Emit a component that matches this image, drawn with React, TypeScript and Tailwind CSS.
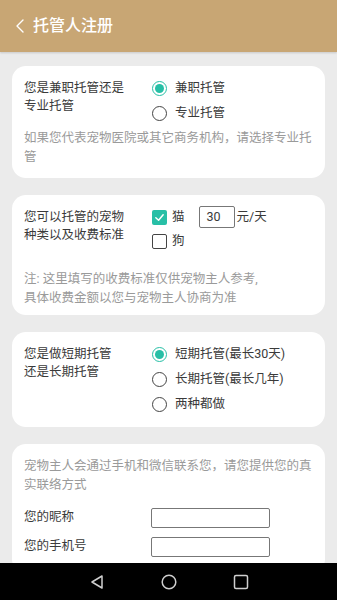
import { ReactNode } from 'react';

const FONT = "font-['Roboto','Noto_Sans_CJK_SC',sans-serif]";

function Radio({ checked, label }: { checked?: boolean; label: string }) {
  return (
    <div className="flex h-[25px] items-center">
      {checked ? (
        <span className="flex h-[15px] w-[15px] items-center justify-center rounded-full border-[1.5px] border-[#27bfa6]">
          <span className="h-[9px] w-[9px] rounded-full bg-[#27bfa6]" />
        </span>
      ) : (
        <span className="h-[15px] w-[15px] rounded-full border-[1.5px] border-[#444]" />
      )}
      <span className="ml-[8px] text-[12.5px] text-[#3a3a3a]">{label}</span>
    </div>
  );
}

function Check({ checked }: { checked?: boolean }) {
  return checked ? (
    <span className="flex h-[15px] w-[15px] items-center justify-center rounded-[2px] bg-[#27bfa6]">
      <svg width="11" height="11" viewBox="0 0 12 12" fill="none">
        <path d="M2 6.2 L5 9 L10 3" stroke="white" strokeWidth="1.6" strokeLinecap="round" strokeLinejoin="round" />
      </svg>
    </span>
  ) : (
    <span className="h-[15px] w-[15px] rounded-[2px] border-[1.5px] border-[#444]" />
  );
}

function Card({ children, className = '' }: { children: ReactNode; className?: string }) {
  return <div className={`rounded-[14px] bg-white px-3 ${className}`}>{children}</div>;
}

function Label({ lines }: { lines: string[] }) {
  return (
    <div className="w-[128px] shrink-0 pt-[3px] text-[12.5px] leading-[18px] text-[#3a3a3a]">
      {lines.map((l) => (
        <div key={l}>{l}</div>
      ))}
    </div>
  );
}

export default function App() {
  return (
    <div className={`flex h-[600px] w-[337px] flex-col overflow-hidden bg-[#ebebeb] ${FONT}`}>
      {/* 标题栏 */}
      <div className="flex h-[52px] shrink-0 items-center bg-[#c8a674] pl-[15px] shadow-[0_1px_2px_rgba(0,0,0,0.15)]">
        <svg width="10" height="16" viewBox="0 0 10 16" fill="none">
          <path d="M8 2 L2 8 L8 14" stroke="white" strokeWidth="1.4" strokeLinecap="round" strokeLinejoin="round" />
        </svg>
        <span className="ml-[8px] text-[16px] font-medium text-white">托管人注册</span>
      </div>

      <div className="flex flex-1 flex-col gap-[17px] overflow-hidden px-3 pt-[14px]">
        {/* 兼职/专业 */}
        <Card className="pt-[10px] pb-[12px]">
          <div className="flex">
            <Label lines={['您是兼职托管还是', '专业托管']} />
            <div className="flex flex-col">
              <Radio checked label="兼职托管" />
              <Radio label="专业托管" />
            </div>
          </div>
          <p className="mt-[2px] text-[12.5px] leading-[19px] text-[#9a9a9a]">
            如果您代表宠物医院或其它商务机构，请选择专业托管
          </p>
        </Card>

        {/* 宠物种类 */}
        <Card className="pt-[10px] pb-[8px]">
          <div className="flex">
            <Label lines={['您可以托管的宠物', '种类以及收费标准']} />
            <div className="flex flex-col">
              <div className="flex h-[24px] items-center">
                <Check checked />
                <span className="ml-[5px] text-[12.5px] text-[#3a3a3a]">猫</span>
                <span className="ml-[14px] flex h-[22px] w-[36px] items-center rounded-[2px] border border-[#777] pl-[7px] text-[12.5px] text-[#3a3a3a]">
                  30
                </span>
                <span className="ml-[2px] text-[12.5px] text-[#3a3a3a]">元/天</span>
              </div>
              <div className="flex h-[24px] items-center">
                <Check />
                <span className="ml-[5px] text-[12.5px] text-[#3a3a3a]">狗</span>
              </div>
            </div>
          </div>
          <p className="mt-[16px] text-[12.5px] leading-[19px] text-[#9a9a9a]">
            注: 这里填写的收费标准仅供宠物主人参考,
            <br />
            具体收费金额以您与宠物主人协商为准
          </p>
        </Card>

        {/* 短期/长期 */}
        <Card className="pt-[10px] pb-[10px]">
          <div className="flex">
            <Label lines={['您是做短期托管', '还是长期托管']} />
            <div className="flex flex-col">
              <Radio checked label="短期托管(最长30天)" />
              <Radio label="长期托管(最长几年)" />
              <Radio label="两种都做" />
            </div>
          </div>
        </Card>

        {/* 联系方式 */}
        <Card className="shrink-0 pt-[12px] pb-[12px]">
          <p className="text-[12.5px] leading-[19px] text-[#9a9a9a]">
            宠物主人会通过手机和微信联系您，请您提供您的真实联络方式
          </p>
          <div className="mt-[9px] flex h-[29px] items-center">
            <span className="w-[127px] shrink-0 text-[12.5px] text-[#3a3a3a]">您的昵称</span>
            <span className="h-[20px] w-[119px] rounded-[2px] border border-[#777]" />
          </div>
          <div className="flex h-[29px] items-center">
            <span className="w-[127px] shrink-0 text-[12.5px] text-[#3a3a3a]">您的手机号</span>
            <span className="h-[20px] w-[119px] rounded-[2px] border border-[#777]" />
          </div>
        </Card>
      </div>

      {/* 导航栏 */}
      <div className="flex h-[37px] shrink-0 items-center justify-center gap-[56px] bg-black">
        <svg width="16" height="16" viewBox="0 0 16 16" fill="none">
          <path d="M13 2 L3 8 L13 14 Z" stroke="#cfcfcf" strokeWidth="1.5" strokeLinejoin="round" />
        </svg>
        <svg width="16" height="16" viewBox="0 0 16 16" fill="none">
          <circle cx="8" cy="8" r="6.8" stroke="#cfcfcf" strokeWidth="1.5" />
        </svg>
        <svg width="16" height="16" viewBox="0 0 16 16" fill="none">
          <rect x="1.5" y="1.5" width="13" height="13" rx="1.5" stroke="#cfcfcf" strokeWidth="1.5" />
        </svg>
      </div>
    </div>
  );
}
